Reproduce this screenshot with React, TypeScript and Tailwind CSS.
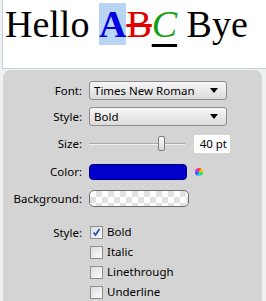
const ui = { fontFamily: '"Noto Sans", "Open Sans", sans-serif' };

function Select({ value }: { value: string }) {
  return (
    <div className="flex h-[19px] w-[138px] items-center justify-between rounded-[3px] border border-[#8d8d8d] bg-gradient-to-b from-[#f6f6f6] to-[#dcdcdc] pl-[4px] pr-[8px] text-[11.5px] leading-none text-black">
      <span>{value}</span>
      <span className="h-0 w-0 border-x-[4px] border-t-[5px] border-x-transparent border-t-black" />
    </div>
  );
}

function Check({ label, checked = false }: { label: string; checked?: boolean }) {
  return (
    <div className="flex h-[20px] items-center gap-[4px]">
      <div className="flex h-[13px] w-[13px] items-center justify-center border border-[#8e8e8e] bg-gradient-to-br from-[#dedede] to-[#fbfbfb]">
        {checked && (
          <svg width="9" height="9" viewBox="0 0 9 9">
            <path d="M1.5 4.5 L3.5 7 L7.5 1" fill="none" stroke="#2a55b0" strokeWidth="1.8" />
          </svg>
        )}
      </div>
      <span className="text-[11.5px] text-black">{label}</span>
    </div>
  );
}

function Row({ label, children, className = "" }: { label: string; children: React.ReactNode; className?: string }) {
  return (
    <div className={`flex items-center ${className}`}>
      <div className="w-[80px] pr-[1px] text-right text-[11.5px] text-black">{label}</div>
      <div className="ml-[6px] flex items-center">{children}</div>
    </div>
  );
}

export default function App() {
  return (
    <div className="h-[301px] w-[266px] overflow-hidden bg-[#eef0f1]" style={ui}>
      {/* preview */}
      <div className="ml-[2px] h-[69px] border-b border-l border-[#c3d3de] bg-white pl-[2px] pt-[1px]">
        <div
          className="whitespace-nowrap text-[38px] leading-[46px] text-black"
          style={{ fontFamily: '"Liberation Serif", serif' }}
        >
          Hello{" "}
          <span className="bg-[#b8d6f4] font-bold text-[#0000e0]">A</span>
          <span className="text-[#e00000] line-through decoration-[#e00000]">B</span>
          <span className="italic text-[#10a010] underline decoration-black underline-offset-[7px]">C</span>{" "}
          Bye
        </div>
      </div>

      {/* panel */}
      <div className="ml-[3px] mr-[4px] mt-[1px] h-[240px] rounded-t-[8px] bg-[#d4d4d4] pt-[11px]">
        <Row label="Font:" className="h-[19px]">
          <Select value="Times New Roman" />
        </Row>
        <Row label="Style:" className="mt-[7px] h-[19px]">
          <Select value="Bold" />
        </Row>
        <Row label="Size:" className="mt-[9px] h-[18px]">
          <div className="relative h-[18px] w-[96px]">
            <div className="absolute left-0 right-0 top-[8px] h-[2px] border-t border-[#a8a8a8] bg-[#f0f0f0]" />
            <div className="absolute left-[69px] top-[1px] h-[15px] w-[7px] rounded-[2px] border border-[#7c7c7c] bg-gradient-to-b from-[#fafafa] to-[#dadada]" />
          </div>
          <div className="ml-[9px] flex h-[18px] w-[36px] items-center justify-end bg-white pr-[3px] text-[11.5px] text-black">
            40 pt
          </div>
        </Row>
        <Row label="Color:" className="mt-[10px] h-[17px]">
          <div className="h-[16px] w-[98px] rounded-[4px] border border-[#00007a] bg-[#0000cc]" />
          <div className="ml-[8px] h-[8px] w-[8px] rounded-full bg-[conic-gradient(#ff3030,#ffd000,#30e030,#20e0ff,#3050ff,#e030ff,#ff3030)]" />
        </Row>
        <Row label="Background:" className="mt-[10px] h-[17px]">
          <div className="h-[17px] w-[100px] rounded-[5px] border border-[#6e6e6e] bg-[repeating-conic-gradient(#e2e2e2_0_25%,#ffffff_0_50%)] bg-[length:12px_12px]" />
        </Row>
        <div className="mt-[15px] flex">
          <div className="w-[80px] pr-[1px] pt-[2px] text-right text-[11.5px] text-black">Style:</div>
          <div className="ml-[7px] flex flex-col">
            <Check label="Bold" checked />
            <Check label="Italic" />
            <Check label="Linethrough" />
            <Check label="Underline" />
          </div>
        </div>
      </div>
    </div>
  );
}
